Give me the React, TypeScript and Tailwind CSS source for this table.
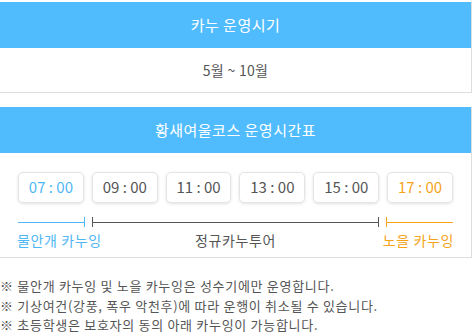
import React from "react";

const font = {
  fontFamily: '"Noto Sans CJK KR", "Noto Sans", sans-serif',
};

const times = [
  { t: "07 : 00", c: "text-[#4fb7f5]" },
  { t: "09 : 00", c: "text-[#555555]" },
  { t: "11 : 00", c: "text-[#555555]" },
  { t: "13 : 00", c: "text-[#555555]" },
  { t: "15 : 00", c: "text-[#555555]" },
  { t: "17 : 00", c: "text-[#f5a31a]" },
];

export default function App() {
  return (
    <div className="w-[472px] h-[333px] bg-white overflow-hidden pt-[2px]" style={font}>
      {/* season */}
      <div className="border-r border-b border-[#dddddd]">
        <div className="h-[46px] bg-[#50bcfe] flex items-center justify-center text-white text-[15px] tracking-[0.5px]">
          카누 운영시기
        </div>
        <div className="h-[44px] flex items-center justify-center text-[#555555] text-[14px] tracking-[0.3px]">
          5월 ~ 10월
        </div>
      </div>

      {/* schedule */}
      <div className="mt-[14px] border-r border-b border-[#dddddd]">
        <div className="h-[46px] bg-[#50bcfe] flex items-center justify-center text-white text-[15px] tracking-[0.5px]">
          황새여울코스 운영시간표
        </div>
        <div className="h-[104px] px-[18px] pt-[19px]">
          <div className="flex gap-[8px]">
            {times.map((x) => (
              <div
                key={x.t}
                className={`w-[66px] h-[31px] rounded-[5px] border border-[#e4e4e4] shadow-[0_1px_3px_rgba(0,0,0,0.12)] flex items-center justify-center text-[15px] ${x.c}`}
              >
                {x.t}
              </div>
            ))}
          </div>
          <div className="flex gap-[7px] mt-[14px] h-[10px] items-center">
            <div className="w-[67px] h-[10px] flex items-center">
              <div className="flex-1 h-px bg-[#4fb7f5]" />
              <div className="w-px h-[10px] bg-[#4fb7f5]" />
            </div>
            <div className="flex-1 h-[10px] flex items-center">
              <div className="w-px h-[10px] bg-[#555555]" />
              <div className="flex-1 h-px bg-[#555555]" />
              <div className="w-px h-[10px] bg-[#555555]" />
            </div>
            <div className="w-[67px] h-[10px] flex items-center">
              <div className="w-px h-[10px] bg-[#f5a31a]" />
              <div className="flex-1 h-px bg-[#f5a31a]" />
            </div>
          </div>
          <div className="flex mt-[3px] text-[14px] leading-[20px] tracking-[0.6px] -mx-px">
            <div className="w-[110px] text-[#4fb7f5] whitespace-nowrap">물안개 카누잉</div>
            <div className="flex-1 text-center text-[#555555]">정규카누투어</div>
            <div className="w-[110px] text-right text-[#f5a31a] whitespace-nowrap">노을 카누잉</div>
          </div>
        </div>
      </div>

      {/* notes */}
      <div className="mt-[18px] text-[13px] leading-[19.5px] tracking-[0.7px] text-[#555555] whitespace-nowrap">
        <p>※ 물안개 카누잉 및 노을 카누잉은 성수기에만 운영합니다.</p>
        <p>※ 기상여건(강풍, 폭우 악천후)에 따라 운행이 취소될 수 있습니다.</p>
        <p>※ 초등학생은 보호자의 동의 아래 카누잉이 가능합니다.</p>
      </div>
    </div>
  );
}
